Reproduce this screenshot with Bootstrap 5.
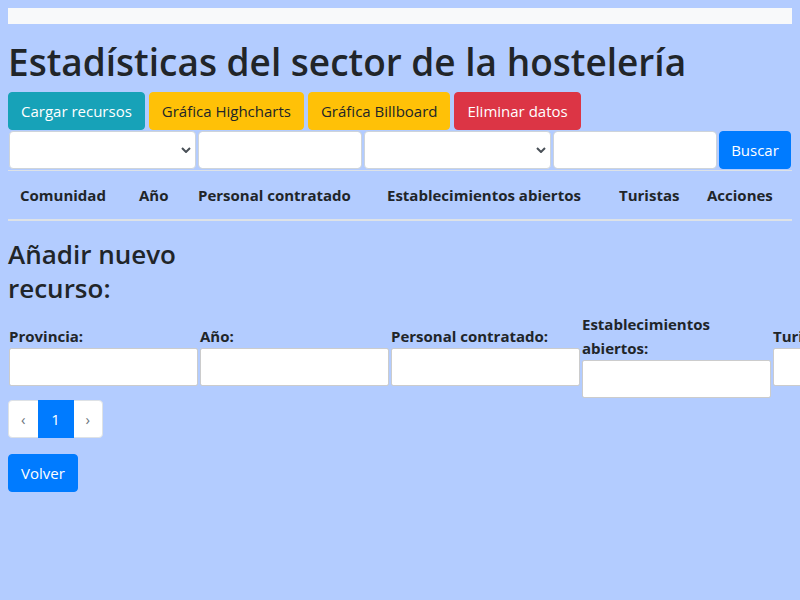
<!DOCTYPE html>
<html lang="es">
<head>
<meta charset="utf-8">
<meta name="viewport" content="width=device-width, initial-scale=1">
<title>Estadísticas del sector de la hostelería</title>
<link href="https://cdn.jsdelivr.net/npm/bootstrap@5.3.0/dist/css/bootstrap.min.css" rel="stylesheet">
<style>
  body { background: #b3ccff; color: #212529; font-family: "Open Sans", "Noto Sans", sans-serif; font-size: 15px; line-height: 24px; overflow-x: hidden; }
  .top-strip { height: 16px; margin-bottom: 14px; }
  .page-title { font-size: 37px; line-height: 48px; font-weight: 600; margin-bottom: 6px; }
  .form-title { font-size: 26px; line-height: 34px; font-weight: 600; width: 190px; margin-top: 16px; margin-bottom: 7px; }
  .btn { font-size: 15px; line-height: 24px; border-radius: 4px; }
  .btn-primary { --bs-btn-bg: #007bff; --bs-btn-border-color: #007bff; }
  .btn-info { --bs-btn-bg: #17a2b8; --bs-btn-border-color: #17a2b8; --bs-btn-color: #fff; }
  .btn-warning { --bs-btn-color: #212529; }
  .search-form { display: grid; grid-template-columns: 187fr 164fr 187fr 164fr 72fr; gap: 2px; padding: 1px 1px 0; }
  .search-form .form-control, .search-form .form-select { height: 38px; border-color: #ced4da; border-radius: 4px; min-width: 0; }
  .form-select { background-image: url("data:image/svg+xml,%3Csvg xmlns='http://www.w3.org/2000/svg' viewBox='0 0 10 6'%3E%3Cpath d='M1 1l4 4 4-4' fill='none' stroke='%23495057' stroke-width='2'/%3E%3C/svg%3E"); background-size: 10px 6px; background-position: right 4px center; }
  .stats-table { --bs-table-bg: transparent; --bs-table-color: #212529; table-layout: fixed; border-top: 1px solid #dee2e6; margin-top: 1px; }
  .stats-table th { padding: 12px; border-bottom: 2px solid #dee2e6; white-space: nowrap; }
  .col-region { width: 119px; }
  .col-year { width: 59px; }
  .col-staff { width: 189px; }
  .col-places { width: 232px; }
  .col-tourists { width: 88px; }
  .new-form { display: grid; grid-auto-flow: column; grid-auto-columns: 189px; gap: 2px; padding: 0 1px; margin-bottom: 2px; }
  .new-form .form-control { height: 38px; border-color: #ccc; border-radius: 2px; }
  .pagination { --bs-pagination-font-size: 15px; --bs-pagination-border-radius: 4px; --bs-pagination-active-bg: #007bff; --bs-pagination-active-border-color: #007bff; --bs-pagination-disabled-bg: #fff; --bs-pagination-disabled-color: #6c757d; }
  .page-link { line-height: 24px; }
  .active > .page-link { min-width: 36px; text-align: center; }
</style>
<script src="https://cdn.jsdelivr.net/npm/bootstrap@5.3.0/dist/js/bootstrap.bundle.min.js"></script>
</head>
<body>
<main class="p-2">
  <div class="top-strip bg-light"></div>
  <h1 class="page-title">Estadísticas del sector de la hostelería</h1>
  <div class="d-flex flex-wrap gap-1">
    <button type="button" class="btn btn-info">Cargar recursos</button>
    <button type="button" class="btn btn-warning">Gráfica Highcharts</button>
    <button type="button" class="btn btn-warning">Gráfica Billboard</button>
    <button type="button" class="btn btn-danger">Eliminar datos</button>
  </div>
  <form class="search-form">
    <select class="form-select" aria-label="Comunidad"><option></option></select>
    <input type="text" class="form-control" aria-label="Valor de comunidad">
    <select class="form-select" aria-label="Año"><option></option></select>
    <input type="text" class="form-control" aria-label="Valor de año">
    <button type="button" class="btn btn-primary px-0">Buscar</button>
  </form>
  <table class="table stats-table mb-0">
    <thead>
      <tr>
        <th scope="col" class="col-region">Comunidad</th>
        <th scope="col" class="col-year">Año</th>
        <th scope="col" class="col-staff">Personal contratado</th>
        <th scope="col" class="col-places">Establecimientos abiertos</th>
        <th scope="col" class="col-tourists">Turistas</th>
        <th scope="col">Acciones</th>
      </tr>
    </thead>
  </table>
  <h3 class="form-title">Añadir nuevo recurso:</h3>
  <form class="new-form align-items-center">
    <div><label class="fw-bold d-block" for="provincia">Provincia:</label><input type="text" class="form-control" id="provincia"></div>
    <div><label class="fw-bold d-block" for="anyo">Año:</label><input type="text" class="form-control" id="anyo"></div>
    <div><label class="fw-bold d-block" for="personal">Personal contratado:</label><input type="text" class="form-control" id="personal"></div>
    <div><label class="fw-bold d-block" for="abiertos">Establecimientos abiertos:</label><input type="text" class="form-control" id="abiertos"></div>
    <div><label class="fw-bold d-block" for="turistas">Turistas:</label><input type="text" class="form-control" id="turistas"></div>
  </form>
  <nav aria-label="Paginación">
    <ul class="pagination mb-3">
      <li class="page-item disabled"><a class="page-link" href="#" aria-label="Anterior">‹</a></li>
      <li class="page-item active"><a class="page-link" href="#">1</a></li>
      <li class="page-item disabled"><a class="page-link" href="#" aria-label="Siguiente">›</a></li>
    </ul>
  </nav>
  <button type="button" class="btn btn-primary">Volver</button>
</main>
</body>
</html>
